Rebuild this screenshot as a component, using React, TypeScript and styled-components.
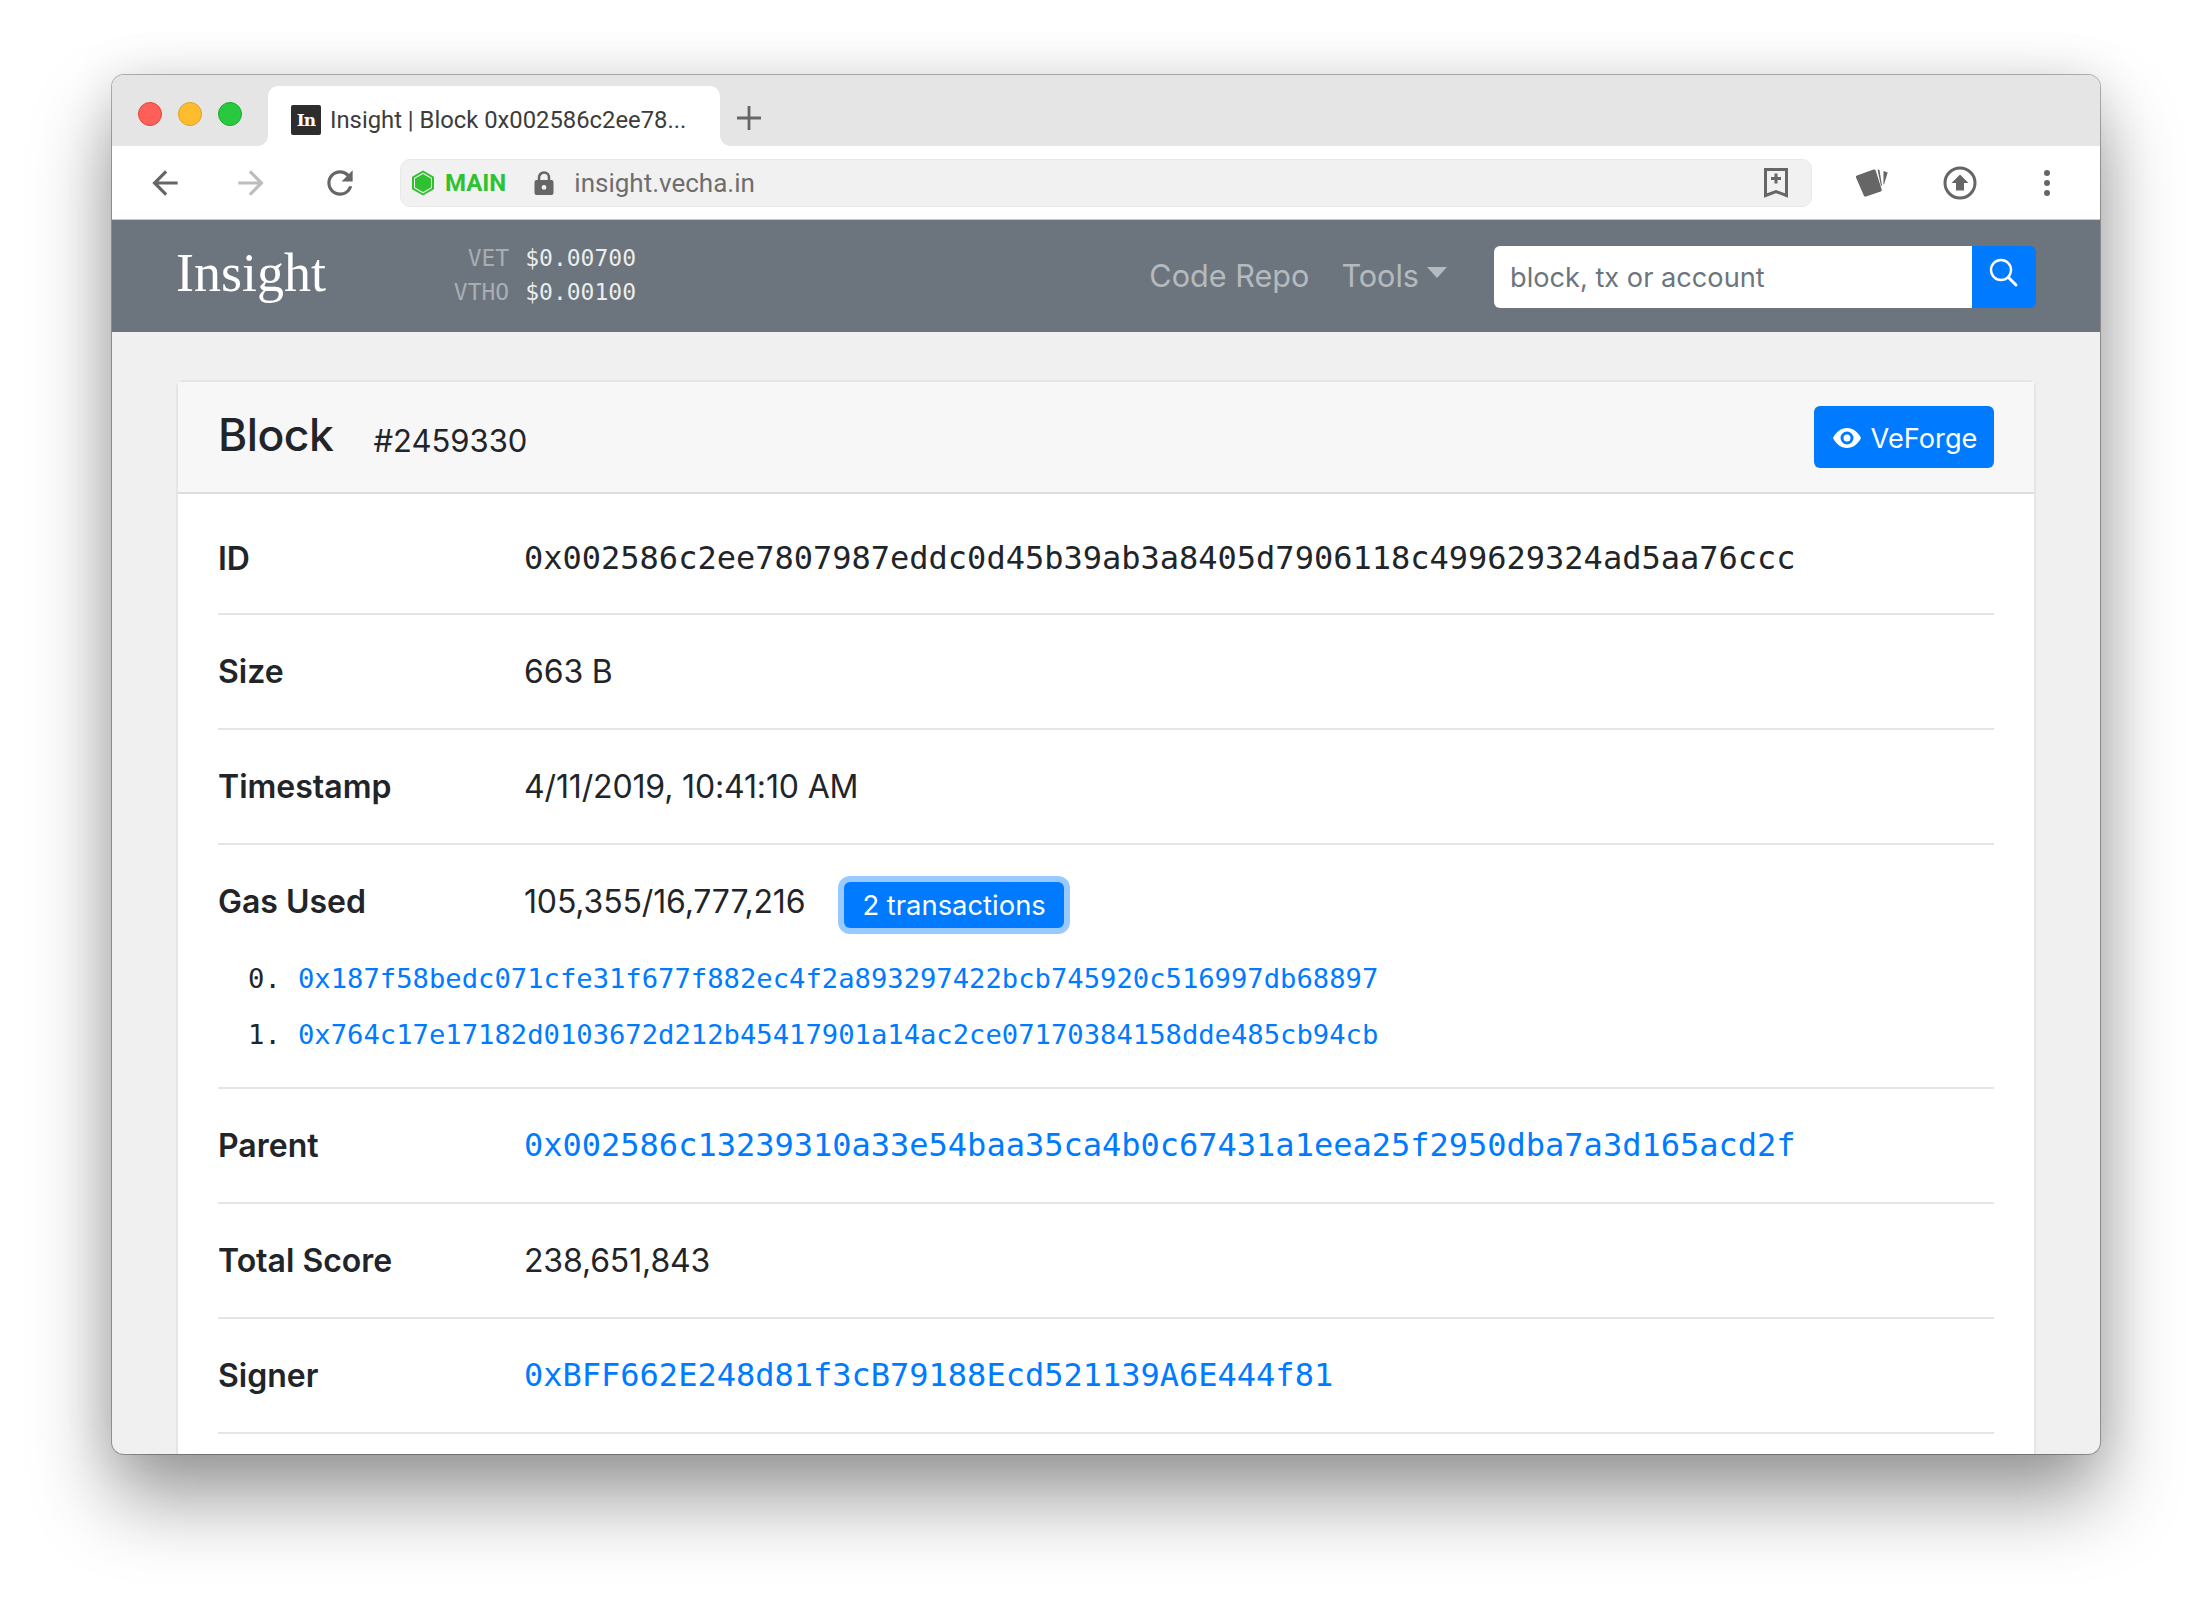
import React from 'react'
import styled, { createGlobalStyle } from 'styled-components'

const GlobalStyle = createGlobalStyle`
  html, body {
    margin: 0;
    padding: 0;
    background: #fff;
    font-family: Inter, "Liberation Sans", sans-serif;
    color: #212529;
  }
  * { box-sizing: border-box; }
`

const MONO = '"DejaVu Sans Mono", "Liberation Mono", monospace'

const rows = [
  { label: 'Size', value: '663 B' },
  { label: 'Timestamp', value: '4/11/2019, 10:41:10 AM' },
]

const txs = [
  '0x187f58bedc071cfe31f677f882ec4f2a893297422bcb745920c516997db68897',
  '0x764c17e17182d0103672d212b45417901a14ac2ce07170384158dde485cb94cb',
]

const Arrow: React.FC<{ flip?: boolean; color: string }> = ({ flip, color }) => (
  <svg width="38" height="38" viewBox="0 0 24 24" style={flip ? { transform: 'scaleX(-1)' } : undefined}>
    <path fill={color} d="M20 11H7.83l5.59-5.59L12 4l-8 8 8 8 1.41-1.41L7.83 13H20v-2z" />
  </svg>
)

const App: React.FC = () => {
  return (
    <Page>
      <GlobalStyle />
      <Window>
        <TabStrip>
          <Lights>
            <Light color="#fe5f57" edge="#e0443e" />
            <Light color="#febc2e" edge="#dea123" />
            <Light color="#28c83f" edge="#1aab29" />
          </Lights>
          <Tab>
            <Favicon>In</Favicon>
            <TabTitle>Insight | Block 0x002586c2ee78...</TabTitle>
          </Tab>
          <NewTab>
            <svg width="26" height="26" viewBox="0 0 26 26">
              <path fill="#666" d="M11.6 1h2.8v10.6H25v2.8H14.4V25h-2.8V14.4H1v-2.8h10.6z" />
            </svg>
          </NewTab>
        </TabStrip>

        <Toolbar>
          <NavIcon><Arrow color="#666" /></NavIcon>
          <NavIcon><Arrow color="#bdbdbd" flip /></NavIcon>
          <ReloadIcon>
            <svg width="38" height="38" viewBox="0 0 24 24">
              <path fill="#666" d="M17.65 6.35A7.958 7.958 0 0 0 12 4c-4.42 0-7.99 3.58-7.99 8s3.57 8 7.99 8c3.73 0 6.84-2.55 7.73-6h-2.08A5.99 5.99 0 0 1 12 18c-3.31 0-6-2.69-6-6s2.69-6 6-6c1.66 0 3.14.69 4.22 1.78L13 11h7V4l-2.35 2.35z" />
            </svg>
          </ReloadIcon>
          <UrlBar>
            <svg width="24" height="26" viewBox="0 0 24 26">
              <path fill="#2fc12f" stroke="#2fc12f" strokeWidth="2" strokeLinejoin="round" d="M12 5l7 4v8l-7 4-7-4V9z" />
              <path fill="none" stroke="#2fc12f" strokeWidth="2" strokeLinejoin="round" d="M12 1.5l10 5.8v11.4L12 24.5 2 18.7V7.3z" />
            </svg>
            <NetName>MAIN</NetName>
            <LockIcon viewBox="0 0 20 24" width="20" height="24">
              <path fill="none" stroke="#666" strokeWidth="2.6" d="M5 10V6.5a5 5 0 0 1 10 0V10" />
              <path fill="#666" fillRule="evenodd" d="M2.5 9h15A2 2 0 0 1 19.5 11v11a2 2 0 0 1-2 2h-15a2 2 0 0 1-2-2V11a2 2 0 0 1 2-2zM10 14a2.4 2.4 0 1 0 0 4.8A2.4 2.4 0 0 0 10 14z" />
            </LockIcon>
            <UrlText>insight.vecha.in</UrlText>
            <BookmarkIcon viewBox="0 0 24 30" width="24" height="30">
              <path fill="none" stroke="#666" strokeWidth="3" d="M1.5 1.5h21v26L12 23.5 1.5 27.5z" />
              <path fill="#666" d="M10.5 5.5h3v3.5H17v3h-3.5v3.5h-3V12H7V9h3.5z" />
            </BookmarkIcon>
          </UrlBar>
          <Extensions>
            <svg width="34" height="30" viewBox="0 0 34 30">
              <path fill="#666" d="M2 7.5L18.5 1.5q1.6-.5 2.2 1l6 19q.4 1.5-1 2.1L11 28.6q-1.6.5-2.2-1L1 9.6q-.5-1.5 1-2.1z" />
              <path fill="#666" d="M22.5 1.5l2 .5 2.5 15.5-1 .5zM28.5 3l4.2 1.4-3.7 12-.6-.2z" />
            </svg>
            <svg width="34" height="34" viewBox="0 0 34 34">
              <circle cx="17" cy="17" r="15" fill="none" stroke="#666" strokeWidth="3" />
              <path fill="#666" d="M17 8.5l8.5 8.5H21v7.5h-8V17H8.5z" />
            </svg>
            <MenuDots>
              <i /><i /><i />
            </MenuDots>
          </Extensions>
        </Toolbar>

        <Navbar>
          <Brand>Insight</Brand>
          <Prices>
            <PriceLabel>VET</PriceLabel>
            <PriceValue>$0.00700</PriceValue>
            <PriceLabel>VTHO</PriceLabel>
            <PriceValue>$0.00100</PriceValue>
          </Prices>
          <NavLink>Code Repo</NavLink>
          <NavLink>Tools<Caret /></NavLink>
          <Search>
            <SearchInput placeholder="block, tx or account" />
            <SearchButton>
              <svg width="30" height="30" viewBox="0 0 30 30">
                <circle cx="12" cy="12" r="10" fill="none" stroke="#fff" strokeWidth="2.4" />
                <path stroke="#fff" strokeWidth="3" strokeLinecap="round" d="M19.5 19.5l7.5 7.5" />
              </svg>
            </SearchButton>
          </Search>
        </Navbar>

        <Content>
          <Card>
            <CardHeader>
              <Title>Block</Title>
              <BlockNumber>#2459330</BlockNumber>
              <ForgeButton>
                <svg width="28" height="20" viewBox="0 0 28 20">
                  <path fill="#fff" fillRule="evenodd" d="M14 0c6 0 11 4 14 10-3 6-8 10-14 10S3 16 0 10C3 4 8 0 14 0zm0 3.5a6.5 6.5 0 1 0 0 13 6.5 6.5 0 0 0 0-13zm0 3a3.5 3.5 0 1 1 0 7 3.5 3.5 0 0 1 0-7z" />
                </svg>
                VeForge
              </ForgeButton>
            </CardHeader>
            <CardBody>
              <FirstRow>
                <Label>ID</Label>
                <Mono>0x002586c2ee7807987eddc0d45b39ab3a8405d7906118c499629324ad5aa76ccc</Mono>
              </FirstRow>
              {rows.map((row) => (
                <Row key={row.label}>
                  <Label>{row.label}</Label>
                  <Value>{row.value}</Value>
                </Row>
              ))}
              <GasRow>
                <GasLine>
                  <Label>Gas Used</Label>
                  <Value>105,355/16,777,216</Value>
                  <TxButton>2 transactions</TxButton>
                </GasLine>
                <TxList>
                  {txs.map((tx, i) => (
                    <TxItem key={tx}>
                      <TxIndex>{i}.</TxIndex>
                      <TxLink>{tx}</TxLink>
                    </TxItem>
                  ))}
                </TxList>
              </GasRow>
              <Row>
                <Label>Parent</Label>
                <MonoLink>0x002586c13239310a33e54baa35ca4b0c67431a1eea25f2950dba7a3d165acd2f</MonoLink>
              </Row>
              <Row>
                <Label>Total Score</Label>
                <Value>238,651,843</Value>
              </Row>
              <Row>
                <Label>Signer</Label>
                <MonoLink>0xBFF662E248d81f3cB79188Ecd521139A6E444f81</MonoLink>
              </Row>
            </CardBody>
          </Card>
        </Content>
      </Window>
    </Page>
  )
}

const Page = styled.div`
  width: 2212px;
  height: 1602px;
  padding: 75px 0 0 112px;
  overflow: hidden;
`

const Window = styled.div`
  width: 1988px;
  height: 1379px;
  border-radius: 12px;
  overflow: hidden;
  display: flex;
  flex-direction: column;
  background: #f0f0f0;
  box-shadow: 0 0 0 1px rgba(0, 0, 0, 0.28), 0 44px 80px rgba(0, 0, 0, 0.4),
    0 0 50px rgba(0, 0, 0, 0.1);
`

const TabStrip = styled.div`
  height: 71px;
  flex-shrink: 0;
  display: flex;
  align-items: flex-end;
  background: #e5e5e5;
`

const Lights = styled.div`
  width: 156px;
  height: 71px;
  padding: 27px 0 0 26px;
  display: flex;
  gap: 16px;
`

const Light = styled.span<{ color: string; edge: string }>`
  width: 24px;
  height: 24px;
  border-radius: 50%;
  background: ${({ color }) => color};
  border: 1px solid ${({ edge }) => edge};
`

const Tab = styled.div`
  position: relative;
  width: 452px;
  height: 60px;
  display: flex;
  align-items: center;
  padding: 8px 0 0 23px;
  background: #fff;
  border-radius: 10px 10px 0 0;

  &::before,
  &::after {
    content: '';
    position: absolute;
    bottom: 0;
    width: 10px;
    height: 10px;
    background: radial-gradient(circle at 0 0, #e5e5e5 9.5px, #fff 10px);
  }
  &::before {
    left: -10px;
  }
  &::after {
    right: -10px;
    transform: scaleX(-1);
  }
`

const Favicon = styled.span`
  width: 30px;
  height: 30px;
  margin-right: 9px;
  border-radius: 2px;
  background: #2d2d2d;
  color: #fff;
  font: bold 17px/30px "DejaVu Serif", "Liberation Serif", serif;
  letter-spacing: -1px;
  text-align: center;
`

const TabTitle = styled.span`
  font: 23.8px Roboto, sans-serif;
  color: #3c3c3c;
  white-space: nowrap;
`

const NewTab = styled.div`
  height: 60px;
  margin-left: 16px;
  display: flex;
  align-items: center;
  padding-top: 4px;
`

const Toolbar = styled.div`
  height: 74px;
  flex-shrink: 0;
  display: flex;
  align-items: center;
  padding-left: 34px;
  background: #fff;
  border-bottom: 1px solid #c8c8c8;
`

const NavIcon = styled.div`
  width: 38px;
  height: 38px;
  margin-right: 48px;
  flex-shrink: 0;
`

const ReloadIcon = styled(NavIcon)`
  margin: 0 41px 0 3px;
`

const UrlBar = styled.div`
  width: 1412px;
  height: 48px;
  display: flex;
  align-items: center;
  padding: 0 23px 0 10px;
  background: #f1f1f1;
  border: 1px solid #e8e8e8;
  border-radius: 10px;
  flex-shrink: 0;
`

const NetName = styled.span`
  margin: 1px 0 0 10px;
  font: bold 24px Roboto, sans-serif;
  color: #2ec22e;
`

const LockIcon = styled.svg`
  margin-left: 28px;
`

const UrlText = styled.span`
  margin: 1px 0 0 20px;
  font: 26px Roboto, sans-serif;
  color: #6e6e6e;
`

const BookmarkIcon = styled.svg`
  margin-left: auto;
`

const Extensions = styled.div`
  flex: 1;
  display: flex;
  align-items: center;
  padding-left: 43px;
  gap: 54px;
`

const MenuDots = styled.div`
  display: flex;
  flex-direction: column;
  gap: 4px;
  margin-left: 13px;
  i {
    width: 6px;
    height: 6px;
    border-radius: 50%;
    background: #666;
  }
`

const Navbar = styled.div`
  height: 112px;
  flex-shrink: 0;
  display: flex;
  align-items: center;
  padding: 0 64px;
  background: #6c757d;
`

const Brand = styled.div`
  width: 200px;
  font: 54px "Liberation Serif", serif;
  color: #fff;
  margin-top: -6px;
`

const Prices = styled.div`
  width: 200px;
  display: grid;
  grid-template-columns: 1fr auto;
  column-gap: 16px;
  row-gap: 6px;
  font: 23px/28px ${MONO};
  margin: -2px auto 0 60px;
`

const PriceLabel = styled.span`
  text-align: right;
  color: rgba(255, 255, 255, 0.42);
`

const PriceValue = styled.span`
  color: rgba(255, 255, 255, 0.88);
`

const NavLink = styled.a`
  display: flex;
  align-items: center;
  margin: -2px 32px 0 0;
  font-size: 30.6px;
  color: rgba(255, 255, 255, 0.5);
`

const Caret = styled.span`
  width: 0;
  height: 0;
  margin: -6px 0 0 8px;
  border-left: 10px solid transparent;
  border-right: 10px solid transparent;
  border-top: 11px solid rgba(255, 255, 255, 0.5);
`

const Search = styled.div`
  width: 542px;
  height: 62px;
  margin: 2px 0 0 15px;
  display: flex;
  border-radius: 6px;
  overflow: hidden;
`

const SearchInput = styled.input`
  flex: 1;
  min-width: 0;
  border: none;
  padding: 0 16px;
  font: 27.2px Inter, sans-serif;
  background: #fff;
  &::placeholder {
    color: #6c757d;
    opacity: 1;
  }
`

const SearchButton = styled.div`
  width: 64px;
  display: flex;
  justify-content: center;
  padding-top: 12px;
  background: #007bff;
`

const Content = styled.div`
  flex: 1;
  min-height: 0;
  padding: 48px 64px 0 64px;
`

const Card = styled.div`
  background: #fff;
  border: 2px solid rgba(0, 0, 0, 0.1);
  border-radius: 8px;
  min-height: 1200px;
`

const CardHeader = styled.div`
  height: 112px;
  display: flex;
  align-items: center;
  padding: 0 40px;
  background: #f7f7f7;
  border-bottom: 2px solid rgba(0, 0, 0, 0.1);
`

const Title = styled.h1`
  margin: -4px 0 0;
  font-size: 44.5px;
  font-weight: 500;
  letter-spacing: -0.5px;
  color: #212529;
`

const BlockNumber = styled.span`
  margin: 6px 0 0 40px;
  font-size: 31px;
`

const ForgeButton = styled.div`
  width: 180px;
  height: 62px;
  margin-left: auto;
  padding: 2px 0 0 2px;
  display: flex;
  align-items: center;
  justify-content: center;
  gap: 10px;
  border-radius: 6px;
  background: #007bff;
  color: #fff;
  font-size: 27.2px;
`

const CardBody = styled.div`
  padding: 0 40px;
`

const Row = styled.div`
  height: 115px;
  display: flex;
  align-items: center;
  border-bottom: 2px solid #e5e5e5;
`

const FirstRow = styled(Row)`
  height: 121px;
  padding-top: 10px;
`

const Label = styled.div`
  width: 306px;
  flex-shrink: 0;
  font-size: 32px;
  font-weight: 600;
`

const Value = styled.div`
  font-size: 32px;
  letter-spacing: -0.15px;
`

const Mono = styled.div`
  font: 32px ${MONO};
  margin-top: -2px;
`

const MonoLink = styled(Mono)`
  color: #007bff;
`

const GasRow = styled.div`
  height: 244px;
  padding-top: 26px;
  border-bottom: 2px solid #e5e5e5;
`

const GasLine = styled.div`
  display: flex;
  align-items: center;
  height: 60px;
`

const TxButton = styled.div`
  height: 46px;
  margin: 7px 0 0 39px;
  padding: 0 18px;
  display: flex;
  align-items: center;
  border-radius: 6px;
  background: #007bff;
  color: #fff;
  font-size: 27.4px;
  box-shadow: 0 0 0 6px rgba(0, 123, 255, 0.4);
`

const TxList = styled.div`
  margin-top: 20px;
  padding-left: 30px;
  font: 27.2px/56px ${MONO};
`

const TxItem = styled.div`
  display: flex;
`

const TxIndex = styled.span`
  width: 50px;
  color: #212529;
`

const TxLink = styled.a`
  color: #007bff;
`

export default App
